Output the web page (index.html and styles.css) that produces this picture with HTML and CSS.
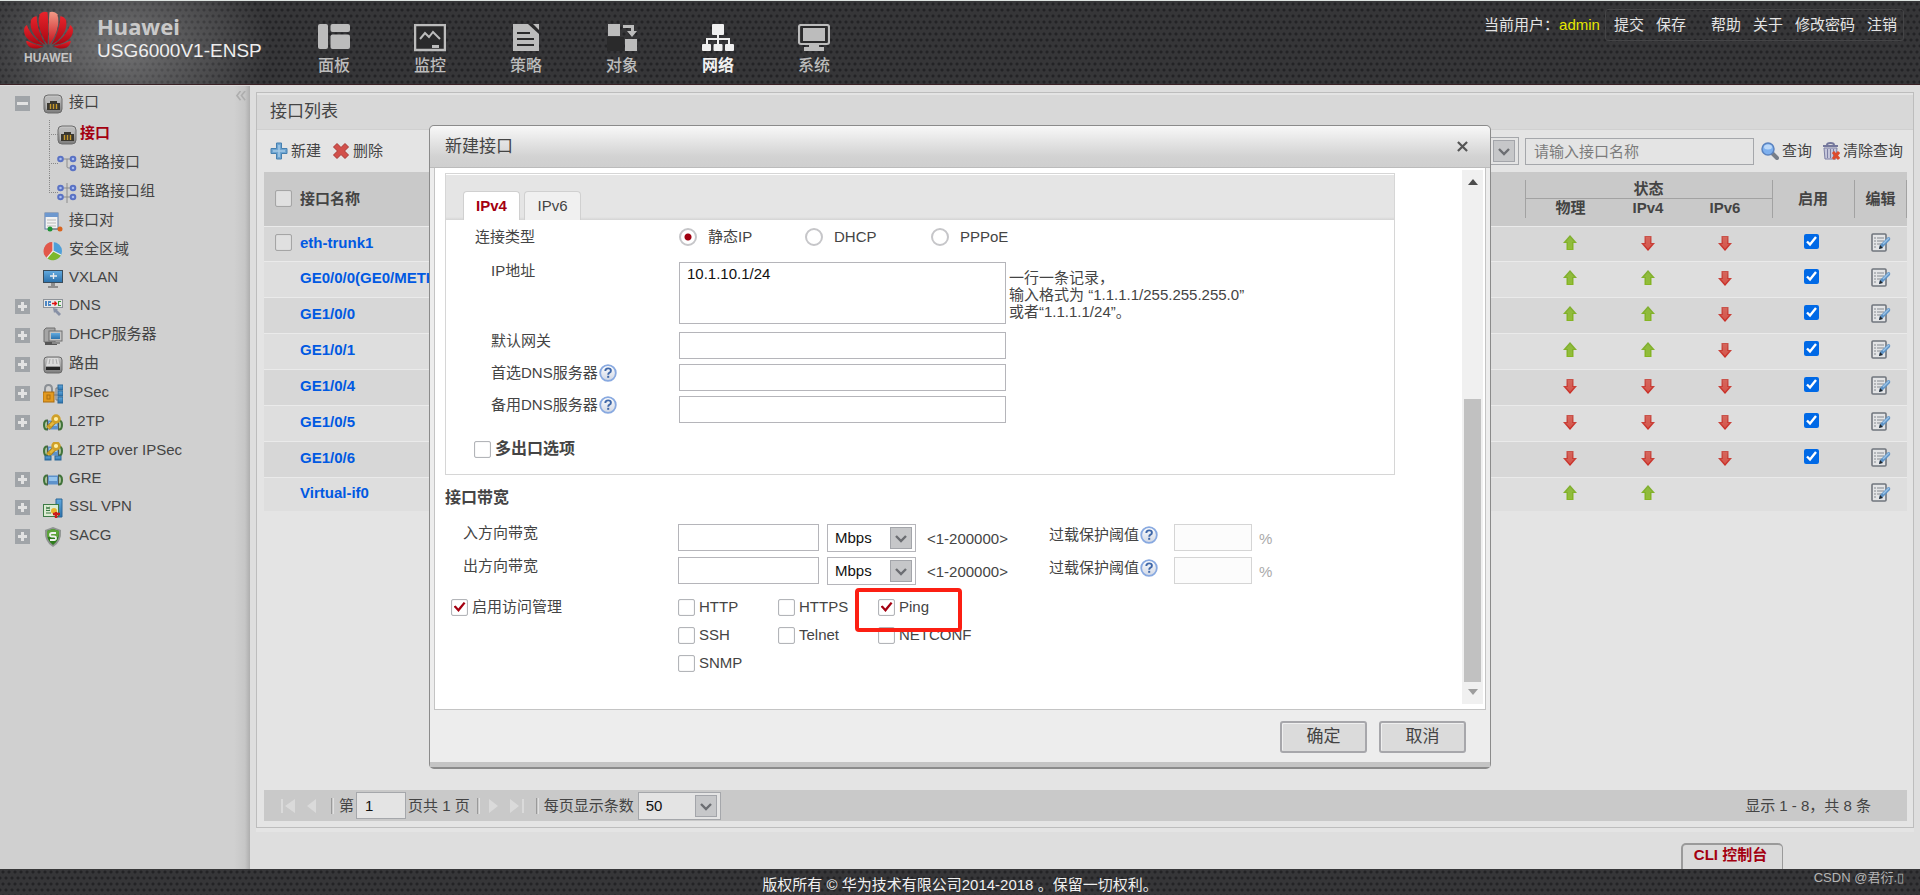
FILE: index.html
```html
<!DOCTYPE html>
<html lang="zh-CN">
<head>
<meta charset="utf-8">
<title>USG6000V1-ENSP</title>
<link rel="stylesheet" href="styles.css">
</head>
<body>
<svg class="defs" aria-hidden="true">
  <defs>
    <linearGradient id="petal" x1="0" y1="0" x2="0" y2="1"><stop offset="0" stop-color="#e8232b"/><stop offset="1" stop-color="#a80713"/></linearGradient>
    <linearGradient id="shine" x1="0" y1="0" x2="0" y2="1"><stop offset="0" stop-color="#f39a86"/><stop offset="1" stop-color="#c5101b"/></linearGradient>
    <linearGradient id="metal" x1="0" y1="0" x2="0" y2="1"><stop offset="0" stop-color="#c9c9c9"/><stop offset="1" stop-color="#7d7d7d"/></linearGradient>
    <linearGradient id="green" x1="0" y1="0" x2="0" y2="1"><stop offset="0" stop-color="#7fae33"/><stop offset="1" stop-color="#86b522"/></linearGradient>
    <linearGradient id="red" x1="0" y1="0" x2="0" y2="1"><stop offset="0" stop-color="#c9544c"/><stop offset="1" stop-color="#c92a22"/></linearGradient>
    <linearGradient id="blue" x1="0" y1="0" x2="0" y2="1"><stop offset="0" stop-color="#62a9de"/><stop offset="1" stop-color="#2c73ae"/></linearGradient>
    <linearGradient id="helpbg" x1="0" y1="0" x2="0" y2="1"><stop offset="0" stop-color="#ffffff"/><stop offset="1" stop-color="#cfd6e4"/></linearGradient>
  </defs>
  <symbol id="i-port" viewBox="0 0 20 20"><rect x="1" y="1" width="18" height="18" rx="4" fill="url(#metal)" stroke="#6c6c6c"/><rect x="3" y="3" width="14" height="13" rx="2" fill="#b9b9b9"/><path d="M4 16V9h3V7h7v2h3v7z" fill="#3b3830"/><path d="M7.500 10v5M10.500 10v5M13.500 10v5" stroke="#c79a2c" stroke-width="1.400"/></symbol>
  <symbol id="i-link" viewBox="0 0 20 20"><path d="M4 5h9M10 5v8q0 1 2 1h3" fill="none" stroke="#8c8c8c"/><g fill="#a9bdf0" stroke="#5a72c4" stroke-width="2"><circle cx="3.500" cy="5" r="2.300"/><circle cx="16" cy="5" r="2.300"/><circle cx="16" cy="14" r="2.300"/></g></symbol>
  <symbol id="i-links" viewBox="0 0 20 20"><path d="M10 0v20M4 5h12M4 14h12" stroke="#8c8c8c"/><g fill="#a9bdf0" stroke="#5a72c4" stroke-width="2"><circle cx="3.500" cy="5" r="2.300"/><circle cx="16" cy="5" r="2.300"/><circle cx="3.500" cy="14" r="2.300"/><circle cx="16" cy="14" r="2.300"/></g></symbol>
  <symbol id="i-pair" viewBox="0 0 20 20"><rect x="2" y="1" width="13" height="16" fill="#f2f2f2" stroke="#5d7ba5"/><path d="M2 1h13v4H2z" fill="#6d98cf"/><path d="M4 8h9M4 11h9M4 14h9" stroke="#b9b9b9"/><path d="M7 17h9" stroke="#777"/><circle cx="7" cy="17" r="2.500" fill="#1f9436"/><circle cx="17" cy="17" r="2.500" fill="#d9641f"/></symbol>
  <symbol id="i-zone" viewBox="0 0 20 20"><circle cx="10" cy="10" r="9" fill="#4f9fd8"/><path d="M10 10L4 17A9 9 0 0 1 10 1z" fill="#e2584a"/><path d="M10 10L4 17A9 9 0 0 0 18 14z" fill="#7cb82b"/><path d="M10 1v9l8 4M10 10l-6 7" stroke="#eee" stroke-width="1.200" fill="none"/></symbol>
  <symbol id="i-vxlan" viewBox="0 0 20 20"><rect x="0" y="1" width="20" height="13" fill="#3a4c5a"/><rect x="1" y="2" width="18" height="11" fill="url(#blue)"/><path d="M7 7h7M10.500 4v6" stroke="#eee" stroke-width="1.300"/><path d="M8 14h4v3h3v2H5v-2h3z" fill="#8d8d8d"/></symbol>
  <symbol id="i-dns" viewBox="0 0 20 20"><rect x="0.500" y="2.500" width="19" height="8" fill="#e8e8e8" stroke="#8e9399"/><path d="M2 4h2v5H2zM5 4h3v2H6v1h2v2H5z" fill="#4b86c4"/><path d="M9 6.500h4M11.500 4.500l2 2-2 2" stroke="#d11" stroke-width="1.300" fill="none"/><path d="M15 4h3v1h-2v3h2v1h-3z" fill="#3a9a3a"/><path d="M10 11l5 1-1 1 4 4-2 2-4-4-1 1z" fill="#8790a5"/></symbol>
  <symbol id="i-dhcp" viewBox="0 0 20 20"><path d="M3 2h9v14H1V4z" fill="#a5a5a5" stroke="#6f6f6f"/><path d="M2 16h12v3H2z" fill="#555"/><rect x="6" y="5" width="13" height="10" fill="#c4c4c4" stroke="#6f6f6f"/><rect x="8" y="7" width="9" height="6" fill="url(#blue)"/><path d="M9 16h8v2H9z" fill="#888"/></symbol>
  <symbol id="i-route" viewBox="0 0 20 20"><rect x="1" y="2" width="18" height="16" rx="3" fill="url(#metal)" stroke="#6a6a6a"/><path d="M5 3h10l2 8H3z" fill="#dcdcdc"/><path d="M6 9l1-5M10 9V4M14 9l-1-5" stroke="#aaa"/><rect x="3" y="12" width="14" height="3" fill="#262626"/></symbol>
  <symbol id="i-ipsec" viewBox="0 0 20 20"><path d="M2 9V5q0-4 3.500-4T9 5v4" fill="none" stroke="#8a8f94" stroke-width="2"/><rect x="0" y="8" width="11" height="10" fill="#e39a20" stroke="#a96c10"/><rect x="4" y="11" width="3" height="4" fill="none" stroke="#a96c10"/><path d="M11 11h4M13 4v12M13 4h2M13 16h2" stroke="#777" fill="none"/><g fill="url(#blue)" stroke="#2b6797"><rect x="15" y="1" width="5" height="5"/><rect x="15" y="7" width="5" height="5"/><rect x="15" y="13" width="5" height="6"/></g></symbol>
  <symbol id="i-pipe" viewBox="0 0 20 20"><path d="M4 5.500q-3 0-3 4.500t3 4.500M16 5.500q3 0 3 4.500t-3 4.500" fill="#a9c39c" stroke="#41733a" stroke-width="2"/><rect x="4" y="5.500" width="12" height="9" fill="#5d92cb"/><rect x="6" y="7" width="8" height="4" fill="#96c4ec"/><path d="M4.500 4.500v11M15.500 4.500v11" stroke="#505a50"/></symbol>
  <symbol id="i-key" viewBox="0 0 20 20"><path d="M5 15l8-8" stroke="#a87c14" stroke-width="4.600"/><path d="M5 15l8-8" stroke="#e6b83c" stroke-width="3"/><circle cx="13" cy="6" r="3.400" fill="#fff0a6" stroke="#d0a028" stroke-width="2.600"/><path d="M5 12l3 3" stroke="#c99b22" stroke-width="2"/></symbol>
  <symbol id="i-l2tp" viewBox="0 0 20 20"><use href="#i-pipe" y="2"/><use href="#i-key" y="0"/></symbol>
  <symbol id="i-l2tpsec" viewBox="0 0 20 20"><use href="#i-pipe" y="-1"/><use href="#i-key" y="-2"/><g fill="url(#blue)" stroke="#2b6797"><rect x="2" y="14" width="6" height="4"/><rect x="12" y="14" width="6" height="4"/></g></symbol>
  <symbol id="i-ssl" viewBox="0 0 20 20"><path d="M13 1h6v18h-6z" fill="url(#blue)" stroke="#2b6797"/><rect x="0.500" y="6.500" width="15" height="12" fill="#dcecd3" stroke="#3d7a45"/><path d="M3 9l4 2M3 11l4-2M3 15h5M3 12.500h4" stroke="#3d7a45"/><circle cx="11" cy="13" r="3" fill="#e8b62d"/><path d="M10 16h7M13 14v6" stroke="#cb1b1b" stroke-width="2.500"/></symbol>
  <symbol id="i-sacg" viewBox="0 0 20 20"><path d="M10 0l8 3q1 12-8 17Q1 15 2 3z" fill="#8f9492"/><path d="M10 2l6 2q1 9-6 14Q3 13 4 4z" fill="#2f7d1c"/><path d="M10 2l6 2q0 4-1 6H4V4z" fill="#5da43a"/><path d="M13 6H9q-2 0-2 1.800T9 9.500h2q2 0 2 1.800T11 13H7" fill="none" stroke="#f1f1f1" stroke-width="1.800"/></symbol>
  <symbol id="i-up" viewBox="0 0 14 16"><path d="M7 0l7 8h-3.500v7h-7V8H0z" fill="url(#green)"/><path d="M7 2l4 5H9v7H5V7H3z" fill="#a4cb57" opacity=".4"/></symbol>
  <symbol id="i-down" viewBox="0 0 14 16"><path d="M7 16l7-8h-3.500V1h-7v7H0z" fill="url(#red)"/><path d="M7 14l4-5H9V2H5v7H3z" fill="#e27b70" opacity=".5"/></symbol>
  <symbol id="i-edit" viewBox="0 0 20 20"><rect x="1" y="1" width="14" height="17" rx="1" fill="#e3e4e6" stroke="#70757d" stroke-width="1.600"/><path d="M3 5h2M6 5h7M3 8h2M6 8h7M3 11h2M6 11h5M3 14h2" stroke="#a5a8ad" stroke-width="1.300"/><path d="M8 16l1-4 8-8q3 0 2 3l-8 8z" fill="#5e93c6"/><path d="M12 11l6-6" stroke="#9cc3e6" stroke-width="1.500"/><path d="M8 16l1-4 3 3z" fill="#23282e"/></symbol>
  <symbol id="i-help" viewBox="0 0 18 18"><circle cx="9" cy="9" r="7.800" fill="url(#helpbg)" stroke="#88a9e0" stroke-width="1.800"/><path d="M6.300 7q0-2.600 2.800-2.600t2.800 2.300q0 1.300-1.400 2-1.300.7-1.300 2" fill="none" stroke="#3f67a8" stroke-width="1.900"/><rect x="8.200" y="11.800" width="2" height="2" fill="#3f67a8"/></symbol>
  <symbol id="i-chev" viewBox="0 0 22 22"><rect x="0.500" y="0.500" width="21" height="21" fill="#c6c7c9" stroke="#a3a5aa"/><path d="M6 9l5 5 5-5" fill="none" stroke="#6c6e72" stroke-width="2.400"/></symbol>
</svg>

<div class="page">
  <header class="top">
    <div class="brand">
      <svg class="logo" viewBox="0 0 50 38" aria-label="HUAWEI" role="img">
        <g fill="url(#petal)">
          <path d="M24 34C17 24 13 13 16 3 19 0 22 0 24 1 25 11 25 22 24 34z"/>
          <path d="M26 34C33 24 37 13 34 3 31 0 28 0 26 1 25 11 25 22 26 34z" fill="url(#shine)"/>
          <path d="M22 34C13 29 5 20 7 9 9 6 11 5 13 5 13 15 17 26 22 34z"/>
          <path d="M28 34C37 29 45 20 43 9 41 6 39 5 37 5 37 15 33 26 28 34z"/>
          <path d="M20 34C10 34 0 28 0 20 0 17 1 15 3 14 6 23 12 29 20 34z"/>
          <path d="M30 34C40 34 50 28 50 20 50 17 49 15 47 14 44 23 38 29 30 34z"/>
          <path d="M20 35.500C14 39 6 39 3 33 2 31 2 30 3 30 9 33 14 35 20 35.500z"/>
          <path d="M30 35.500C36 39 44 39 47 33 48 31 48 30 47 30 41 33 36 35 30 35.500z"/>
        </g>
      </svg>
      <span class="logo-name">HUAWEI</span>
    </div>
    <div class="product"><strong>Huawei</strong><span>USG6000V1-ENSP</span></div>
    <nav class="mainnav">
      <a href="#"><svg viewBox="0 0 32 28" fill="currentColor"><rect x="0" y="0" width="10" height="25" rx="2"/><rect x="12.500" y="0" width="19.500" height="8" rx="2"/><rect x="12.500" y="10.500" width="19.500" height="14.500" rx="2"/></svg>面板</a>
      <a href="#"><svg viewBox="0 0 32 28"><rect x="1" y="1" width="30" height="25" fill="#2a2a2b" stroke="currentColor" stroke-width="2.500"/><path d="M6 15l5-6 4 4 4-5 7 7" fill="none" stroke="currentColor" stroke-width="2"/><path d="M18 24v-3h7v3z" fill="currentColor"/></svg>监控</a>
      <a href="#"><svg viewBox="0 0 32 28"><path d="M3 0h17l9 9v18H3z" fill="currentColor"/><path d="M18 0l11 10V0z" fill="#2a2a2b"/><path d="M23 0h6v6z" fill="currentColor"/><path d="M7 9h13M7 15h17M7 21h17" stroke="#2a2a2b" stroke-width="2"/></svg>策略</a>
      <a href="#"><svg viewBox="0 0 32 28" fill="currentColor"><path d="M1 13h17v14H1z" fill="#2a2a2b"/><rect x="2" y="0" width="12" height="12"/><rect x="19" y="15" width="12" height="12"/><path d="M17 1h11v6h3l-5 6-5-6h4V4h-8z"/></svg>对象</a>
      <a href="#" class="on"><svg viewBox="0 0 32 28" fill="currentColor"><rect x="10" y="0" width="12" height="11" rx="1"/><rect x="0" y="20" width="9" height="7" rx="1"/><rect x="11.500" y="20" width="9" height="7" rx="1"/><rect x="23" y="20" width="9" height="7" rx="1"/><path d="M15 10h2v4h11v7h-2v-5h-9v5h-2v-5H6v5H4v-7h11z"/></svg>网络</a>
      <a href="#"><svg viewBox="0 0 32 28"><rect x="1" y="1" width="30" height="19" rx="2" fill="#2a2a2b" stroke="currentColor" stroke-width="2.200"/><rect x="5" y="4" width="22" height="13" fill="currentColor"/><path d="M11 20h10v3h5v4H6v-4h5z" fill="currentColor"/></svg>系统</a>
    </nav>
    <div class="user">
      <span>当前用户：<b class="name">admin</b></span>
      <div class="links"><a href="#">提交</a><a href="#" class="last">保存</a><a href="#">帮助</a><a href="#">关于</a><a href="#">修改密码</a><a href="#">注销</a></div>
    </div>
  </header>

  <div class="middle">
    <aside class="side">
      <button class="fold" aria-label="折叠"><svg viewBox="0 0 12 10"><path d="M5 0L1 5l4 5M10 0L6 5l4 5" fill="none" stroke="#adadad" stroke-width="1.800"/></svg></button>
      <ul class="tree">
        <li class="root"><button class="tog minus" aria-label="收起"></button><svg class="ic"><use href="#i-port"/></svg><a href="#">接口</a></li>
        <li class="sub on"><svg class="ic"><use href="#i-port"/></svg><a href="#">接口</a></li>
        <li class="sub"><svg class="ic"><use href="#i-link"/></svg><a href="#">链路接口</a></li>
        <li class="sub end"><svg class="ic"><use href="#i-links"/></svg><a href="#">链路接口组</a></li>
        <li><i class="tog none"></i><svg class="ic"><use href="#i-pair"/></svg><a href="#">接口对</a></li>
        <li><i class="tog none"></i><svg class="ic"><use href="#i-zone"/></svg><a href="#">安全区域</a></li>
        <li class="short"><i class="tog none"></i><svg class="ic"><use href="#i-vxlan"/></svg><a href="#">VXLAN</a></li>
        <li><button class="tog" aria-label="展开"></button><svg class="ic"><use href="#i-dns"/></svg><a href="#">DNS</a></li>
        <li><button class="tog" aria-label="展开"></button><svg class="ic"><use href="#i-dhcp"/></svg><a href="#">DHCP服务器</a></li>
        <li><button class="tog" aria-label="展开"></button><svg class="ic"><use href="#i-route"/></svg><a href="#">路由</a></li>
        <li><button class="tog" aria-label="展开"></button><svg class="ic"><use href="#i-ipsec"/></svg><a href="#">IPSec</a></li>
        <li><button class="tog" aria-label="展开"></button><svg class="ic"><use href="#i-l2tp"/></svg><a href="#">L2TP</a></li>
        <li><i class="tog none"></i><svg class="ic"><use href="#i-l2tpsec"/></svg><a href="#">L2TP over IPSec</a></li>
        <li class="short"><button class="tog" aria-label="展开"></button><svg class="ic"><use href="#i-pipe"/></svg><a href="#">GRE</a></li>
        <li><button class="tog" aria-label="展开"></button><svg class="ic"><use href="#i-ssl"/></svg><a href="#">SSL VPN</a></li>
        <li><button class="tog" aria-label="展开"></button><svg class="ic"><use href="#i-sacg"/></svg><a href="#">SACG</a></li>
      </ul>
    </aside>

    <main class="main">
      <section class="panel">
        <h1 class="panel-title">接口列表</h1>
        <div class="toolbar">
          <button class="tool"><svg viewBox="0 0 18 18"><path d="M6.500 1h5v5.500H17v5h-5.500V17h-5v-5.500H1v-5h5.500z" fill="#6fa5d1" stroke="#4680b0"/><path d="M9 3v12M3 9h12" stroke="#a6cae6" stroke-width="1.500"/></svg>新建</button>
          <button class="tool"><svg viewBox="0 0 18 18"><path d="M5 1.500l4 4 4-4 3.500 3.500-4 4 4 4-3.500 3.500-4-4-4 4L1.500 13l4-4-4-4z" fill="#d2504b" stroke="#a93632"/></svg>删除</button>
          <div class="search">
            <span class="sel field"><select aria-label="查询条件"><option>接口名称</option></select><svg><use href="#i-chev"/></svg></span>
            <input class="box query" type="text" placeholder="请输入接口名称" aria-label="接口名称">
            <button class="tool"><svg viewBox="0 0 18 18"><path d="M11 11l5 5" stroke="#777e88" stroke-width="4" stroke-linecap="round"/><circle cx="7" cy="7" r="6" fill="#7eb0ee" stroke="#5b83bf" stroke-width="1.500"/><ellipse cx="7" cy="5" rx="4" ry="2.500" fill="#bcd8f8"/></svg>查询</button>
            <button class="tool"><svg viewBox="0 0 18 18"><path d="M1 4h15M5 3q0-2 3.500-2T12 3" fill="none" stroke="#74779c" stroke-width="2"/><path d="M2 6h13l-1 11H3z" fill="#c5c6da" stroke="#7c7fa4"/><path d="M5.500 7v9M8.500 7v9M11.500 7v9" stroke="#7c7fa4"/><path d="M11 10l6 7M17 10l-6 7" stroke="#dd4b2d" stroke-width="3"/></svg>清除查询</button>
          </div>
        </div>
        <table class="list">
          <colgroup><col class="c-check"><col><col class="c-phy"><col class="c-v4"><col class="c-v6"><col class="c-on"><col class="c-edit"></colgroup>
          <thead>
            <tr><th rowspan="2"><input type="checkbox" class="chk dim" aria-label="全选"></th><th rowspan="2" class="left">接口名称</th><th colspan="3" class="group">状态</th><th rowspan="2" class="sep">启用</th><th rowspan="2" class="sep both">编辑</th></tr>
            <tr><th class="phy low">物理</th><th>IPv4</th><th class="v6">IPv6</th></tr>
          </thead>
          <tbody>
            <tr><td><input type="checkbox" class="chk dim" aria-label="eth-trunk1"></td><td class="left"><a href="#">eth-trunk1</a></td><td class="phy"><svg class="ar"><use href="#i-up"/></svg></td><td><svg class="ar"><use href="#i-down"/></svg></td><td class="v6"><svg class="ar"><use href="#i-down"/></svg></td><td class="use"><input type="checkbox" class="nat" checked aria-label="启用"></td><td><svg class="ed"><use href="#i-edit"/></svg></td></tr>
            <tr><td></td><td class="left"><a href="#">GE0/0/0(GE0/METH)</a></td><td class="phy"><svg class="ar"><use href="#i-up"/></svg></td><td><svg class="ar"><use href="#i-up"/></svg></td><td class="v6"><svg class="ar"><use href="#i-down"/></svg></td><td class="use"><input type="checkbox" class="nat" checked aria-label="启用"></td><td><svg class="ed"><use href="#i-edit"/></svg></td></tr>
            <tr><td></td><td class="left"><a href="#">GE1/0/0</a></td><td class="phy"><svg class="ar"><use href="#i-up"/></svg></td><td><svg class="ar"><use href="#i-up"/></svg></td><td class="v6"><svg class="ar"><use href="#i-down"/></svg></td><td class="use"><input type="checkbox" class="nat" checked aria-label="启用"></td><td><svg class="ed"><use href="#i-edit"/></svg></td></tr>
            <tr><td></td><td class="left"><a href="#">GE1/0/1</a></td><td class="phy"><svg class="ar"><use href="#i-up"/></svg></td><td><svg class="ar"><use href="#i-up"/></svg></td><td class="v6"><svg class="ar"><use href="#i-down"/></svg></td><td class="use"><input type="checkbox" class="nat" checked aria-label="启用"></td><td><svg class="ed"><use href="#i-edit"/></svg></td></tr>
            <tr><td></td><td class="left"><a href="#">GE1/0/4</a></td><td class="phy"><svg class="ar"><use href="#i-down"/></svg></td><td><svg class="ar"><use href="#i-down"/></svg></td><td class="v6"><svg class="ar"><use href="#i-down"/></svg></td><td class="use"><input type="checkbox" class="nat" checked aria-label="启用"></td><td><svg class="ed"><use href="#i-edit"/></svg></td></tr>
            <tr><td></td><td class="left"><a href="#">GE1/0/5</a></td><td class="phy"><svg class="ar"><use href="#i-down"/></svg></td><td><svg class="ar"><use href="#i-down"/></svg></td><td class="v6"><svg class="ar"><use href="#i-down"/></svg></td><td class="use"><input type="checkbox" class="nat" checked aria-label="启用"></td><td><svg class="ed"><use href="#i-edit"/></svg></td></tr>
            <tr><td></td><td class="left"><a href="#">GE1/0/6</a></td><td class="phy"><svg class="ar"><use href="#i-down"/></svg></td><td><svg class="ar"><use href="#i-down"/></svg></td><td class="v6"><svg class="ar"><use href="#i-down"/></svg></td><td class="use"><input type="checkbox" class="nat" checked aria-label="启用"></td><td><svg class="ed"><use href="#i-edit"/></svg></td></tr>
            <tr><td></td><td class="left"><a href="#">Virtual-if0</a></td><td class="phy"><svg class="ar"><use href="#i-up"/></svg></td><td><svg class="ar"><use href="#i-up"/></svg></td><td></td><td></td><td><svg class="ed"><use href="#i-edit"/></svg></td></tr>
          </tbody>
        </table>
        <div class="pager">
          <button class="pg" aria-label="首页"><svg viewBox="0 0 16 14"><path d="M1 0h2v14H1zM15 0v14L5 7z"/></svg></button>
          <button class="pg" aria-label="上一页"><svg viewBox="0 0 16 14"><path d="M12 0v14L3 7z"/></svg></button>
          <i class="bar"></i>
          <label for="pageno">第</label><input id="pageno" class="box page-no" type="text" value="1"><span class="pages">页共 1 页</span>
          <i class="bar"></i>
          <button class="pg" aria-label="下一页"><svg viewBox="0 0 16 14"><path d="M4 0v14l9-7z"/></svg></button>
          <button class="pg" aria-label="末页"><svg viewBox="0 0 16 14"><path d="M1 0v14l9-7zM13 0h2v14h-2z"/></svg></button>
          <i class="bar"></i>
          <label for="pagesize">每页显示条数</label><span class="sel size"><select id="pagesize"><option>50</option></select><svg><use href="#i-chev"/></svg></span>
          <span class="total">显示 1 - 8，共 8 条</span>
        </div>
      </section>
      <button class="cli">CLI 控制台</button>
    </main>
  </div>

  <footer class="foot">版权所有 © 华为技术有限公司2014-2018 。保留一切权利。<span class="mark">CSDN @君衍.▯</span></footer>
</div>

<div class="dialog" role="dialog" aria-label="新建接口">
  <div class="dlg-head"><span>新建接口</span><button aria-label="关闭"><svg viewBox="0 0 12 12"><path d="M1 1l10 10M11 1L1 11" stroke="#555" stroke-width="2.400"/></svg></button></div>
  <div class="dlg-body">
    <form class="form">
      <div class="ipbox">
        <div class="tabs"><button type="button" class="on">IPv4</button><button type="button">IPv6</button></div>
        <div class="row type">
          <span class="lab">连接类型</span>
          <div class="radios">
            <label><input type="radio" name="t" checked>静态IP</label>
            <label><input type="radio" name="t">DHCP</label>
            <label><input type="radio" name="t">PPPoE</label>
          </div>
        </div>
        <div class="row tall">
          <label class="lab in" for="ip">IP地址</label>
          <div class="with-hint"><textarea id="ip" class="box">10.1.10.1/24</textarea>
          <p>一行一条记录，<br>输入格式为 “1.1.1.1/255.255.255.0”<br>或者“1.1.1.1/24”。</p></div>
        </div>
        <div class="row"><label class="lab in" for="gw">默认网关</label><input id="gw" class="box wide" type="text"></div>
        <div class="row"><label class="lab in" for="d1">首选DNS服务器<svg class="help"><use href="#i-help"/></svg></label><input id="d1" class="box wide" type="text"></div>
        <div class="row"><label class="lab in" for="d2">备用DNS服务器<svg class="help"><use href="#i-help"/></svg></label><input id="d2" class="box wide" type="text"></div>
        <label class="ck multi"><input type="checkbox" class="chk">多出口选项</label>
      </div>
      <h2>接口带宽</h2>
      <div class="band">
        <label class="lab" for="bi">入方向带宽</label><input id="bi" class="box" type="text">
        <span class="sel"><select aria-label="入方向单位"><option>Mbps</option></select><svg><use href="#i-chev"/></svg></span><span class="mid">&lt;1-200000&gt;</span>
        <label class="lab2" for="ti">过载保护阈值<svg class="help"><use href="#i-help"/></svg></label><input id="ti" class="box" type="text" disabled><span class="mid off">%</span>
      </div>
      <div class="band">
        <label class="lab" for="bo">出方向带宽</label><input id="bo" class="box" type="text">
        <span class="sel"><select aria-label="出方向单位"><option>Mbps</option></select><svg><use href="#i-chev"/></svg></span><span class="mid">&lt;1-200000&gt;</span>
        <label class="lab2" for="to">过载保护阈值<svg class="help"><use href="#i-help"/></svg></label><input id="to" class="box" type="text" disabled><span class="mid off">%</span>
      </div>
      <div class="access">
        <label class="ck"><input type="checkbox" class="chk" checked>启用访问管理</label>
        <div class="protos">
          <label class="ck"><input type="checkbox" class="chk">HTTP</label>
          <label class="ck"><input type="checkbox" class="chk">HTTPS</label>
          <label class="ck ping"><input type="checkbox" class="chk" checked>Ping</label>
          <label class="ck"><input type="checkbox" class="chk">SSH</label>
          <label class="ck"><input type="checkbox" class="chk">Telnet</label>
          <label class="ck"><input type="checkbox" class="chk">NETCONF</label>
          <label class="ck"><input type="checkbox" class="chk">SNMP</label>
        </div>
      </div>
    </form>
    <div class="scroll" aria-hidden="true">
      <svg viewBox="0 0 10 6"><path d="M0 6l5-6 5 6z" fill="#4d4d4d"/></svg>
      <span class="track"></span><span class="thumb"></span>
      <svg viewBox="0 0 10 6"><path d="M0 0h10L5 6z" fill="#9d9d9d"/></svg>
    </div>
  </div>
  <div class="dlg-foot"><button>确定</button><button>取消</button></div>
</div>
</body>
</html>
```
FILE: styles.css
```css
*, *::before, *::after { box-sizing: border-box; }
body {
  margin: 0;
  font: 15px/18px "Liberation Sans", "Noto Sans CJK SC", sans-serif;
  color: #444;
  background: #dedede;
}
a { color: inherit; text-decoration: none; }
button, input, select, textarea { font: inherit; color: inherit; margin: 0; }
button { background: none; border: 0; padding: 0; }
ul { list-style: none; margin: 0; padding: 0; }
.defs { position: absolute; width: 0; height: 0; }

.page { min-height: 100vh; display: grid; grid-template-rows: 85px 1fr 26px; }

/* header */
.top, .foot {
  background-color: #363638;
  background-image: radial-gradient(circle at 3px 3px, #232325 1px, transparent 2px), radial-gradient(circle at 0 9px, #232325 1px, transparent 2px), radial-gradient(circle at 6px 9px, #232325 1px, transparent 2px);
  background-size: 6px 12px;
}
.top {
  display: flex;
  align-items: flex-start;
  border-top: 1px solid #dde3e0;
  border-bottom: 1px solid #3a2226;
  background-image: radial-gradient(ellipse 150px 100px at 120px 45px, rgba(200,200,200,.42), transparent), radial-gradient(circle at 3px 3px, #232325 1px, transparent 2px), radial-gradient(circle at 0 9px, #232325 1px, transparent 2px), radial-gradient(circle at 6px 9px, #232325 1px, transparent 2px);
  background-size: auto, 6px 12px, 6px 12px, 6px 12px;
}
.brand { width: 97px; padding: 10px 0 0 24px; display: flex; flex-direction: column; color: #c4c4c4; }
.logo { width: 49px; height: 38px; }
.logo-name { font: bold 12px/14px "Liberation Sans", sans-serif; margin-top: 2px; }
.product { width: 213px; padding-top: 13px; display: flex; flex-direction: column; color: #eee; font-size: 19px; line-height: 26px; }
.product strong { font: bold 22px/24px "Noto Sans", sans-serif; color: #c9c9c9; }
.mainnav { display: flex; flex: 1; }
.mainnav a { width: 96px; padding-top: 23px; display: flex; flex-direction: column; gap: 2px; font-size: 16px; line-height: 24px; font-weight: 500; color: #bcbcbc; padding-left: 8px; }
.mainnav svg { width: 32px; height: 28px; }
.mainnav .on { color: #f0f0f0; font-weight: bold; }
.user { display: flex; color: #e4e4e4; padding: 8px 16px 0 0; line-height: 32px; }
.user .name { font-weight: normal; color: #e6e600; }
.links { display: flex; gap: 12px; margin-left: 5px; padding: 0 6px 0 8px; border: 1px solid #444446; border-radius: 3px; line-height: 30px; }
.links .last { margin-right: 13px; }

/* sidebar */
.middle { display: flex; }
.side { width: 250px; position: relative; border-top: 1px solid #dcdcdc; padding-top: 3px; background: linear-gradient(to right, #d0d0d0 234px, #c6c6c6 245px, #aeaeae); }
.fold { position: absolute; top: 5px; right: 3px; width: 11px; height: 10px; }
.fold svg { display: block; }
.tree li { display: flex; align-items: center; height: 29px; padding-left: 15px; position: relative; }
.tree .root { padding-bottom: 2px; height: 31px; }
.tree .short { height: 27px; }
.tog { width: 15px; height: 15px; margin-right: 13px; background: linear-gradient(#e2e2e2, #e2e2e2) center/9px 3px no-repeat, linear-gradient(#e2e2e2, #e2e2e2) center/3px 9px no-repeat, #a0a4a8; }
.tog.minus { background: linear-gradient(#e2e2e2, #e2e2e2) center/11px 3px no-repeat, #a0a4a8; }
.tog.none { background: none; }
.ic { width: 20px; height: 20px; margin-right: 6px; }
.tree a { padding-bottom: 4px; }
.tree .sub { padding-left: 57px; }
.tree .sub .ic { margin-right: 3px; }
.tree .on a { color: #a40010; font-weight: bold; }
.sub::before { content: ""; position: absolute; left: 49px; top: 0; height: 29px; border-left: 1px dotted #888; }
.sub.end::before { height: 15px; }
.sub::after { content: ""; position: absolute; left: 49px; top: 14px; width: 9px; border-top: 1px dotted #888; }

/* interface list */
.main { flex: 1; display: flex; flex-direction: column; padding: 7px 6px 0; }
.panel { flex: 1; display: flex; flex-direction: column; border: 1px solid #bdbdbd; background: #e4e4e4; box-shadow: 0 4px #e4e4e4; padding-bottom: 6px; }
.panel-title { margin: 2px 0 0; padding-left: 13px; font-size: 17px; font-weight: normal; line-height: 34px; background: #d8d8d8; border-bottom: 1px solid #d0d0d0; }
.toolbar { display: flex; align-items: center; gap: 11px; height: 42px; padding: 0 10px 0 13px; }
.tool { display: flex; align-items: center; gap: 3px; white-space: nowrap; }
.tool svg { width: 18px; height: 18px; }
.search { margin-left: auto; display: flex; align-items: center; gap: 6px; }
.search .box { width: 229px; margin-right: 1px; }
.search .tool + .tool { margin-left: 4px; }
.box { height: 27px; border: 1px solid #b5b5ba; padding: 0 8px; background: #fff; color: #111; border-radius: 0; outline: 0; }
.panel .box, .panel .sel { background: #e4e4e4; border-color: #a5a7ab; }
.box::placeholder { color: #7c7c7c; }
.sel { display: grid; align-items: center; width: 89px; height: 28px; border: 1px solid #b5b5ba; background: #fff; }
.sel select { grid-area: 1/1; appearance: none; border: 0; background: none; padding: 0 7px; color: #111; height: 26px; }
.sel svg { grid-area: 1/1; justify-self: end; width: 22px; height: 22px; margin-right: 3px; pointer-events: none; }
.sel.field { width: 140px; }
.list { width: calc(100% - 13px); margin-left: 7px; border-collapse: collapse; table-layout: fixed; }
.c-check { width: 29px; } .c-phy { width: 85px; } .c-v4 { width: 76px; } .c-v6 { width: 86px; } .c-on { width: 82px; } .c-edit { width: 53px; }
.list th, .list td { padding: 0; text-align: center; }
.list .left { text-align: left; padding-left: 7px; }
.list thead { background: #c9c9c9; }
.list thead tr { height: 27px; }
.list thead tr + tr th { line-height: 18px; vertical-align: top; }
.list .group { background: linear-gradient(#a2a2a2, #a2a2a2) left bottom/1px 19px no-repeat, linear-gradient(#a2a2a2, #a2a2a2) left bottom/100% 1px no-repeat; line-height: 16px; vertical-align: bottom; padding-bottom: 2px; }
.list .low { background: linear-gradient(#a2a2a2, #a2a2a2) left top/1px 19px no-repeat; }
.list .sep { background: linear-gradient(#a2a2a2, #a2a2a2) left center/1px 38px no-repeat; }
.list .both { background: linear-gradient(#a2a2a2, #a2a2a2) left center/1px 38px no-repeat, linear-gradient(#a2a2a2, #a2a2a2) right center/1px 38px no-repeat; }
.list .phy { padding-left: 6px; }
.list .v6 { padding-right: 8px; }
.list tbody tr { height: 36px; border-top: 1px solid #eaeaea; background: #dedede; }
.list tbody tr:nth-child(odd) { background: #d7d7d7; }
.list tbody tr:first-child { height: 35px; }
.list tbody tr:last-child { height: 34px; }
.list td { padding-bottom: 2px; }
.list .use { padding: 0 4px 5px 0; }
.list td a { color: #0059e2; font-weight: bold; }
.list td .chk, .list td svg, .list td .nat { display: block; margin: 0 auto; }
.ar { width: 14px; height: 16px; }
.ed { width: 20px; height: 20px; }
.nat { width: 15px; height: 15px; accent-color: #0069e6; }
.list .chk { display: block; margin-left: 11px; }
.list td .chk { margin-left: 11px; }

.pager { margin: auto 6px 0 7px; height: 31px; display: flex; align-items: center; background: #c9c9c9; padding: 0 36px 0 16px; white-space: nowrap; }
.pg { width: 24px; height: 14px; display: flex; }
.pg svg { width: 16px; height: 14px; fill: #dadada; }
.bar { width: 3px; height: 16px; margin: 0 5px 0 3px; border-left: 1px solid #9a9a9a; border-right: 1px solid #e0e0e0; }
.page-no { width: 50px; margin: 0 2px; }
.pages { margin-right: 4px; }
.pager .sel { width: 83px; margin-left: 4px; }
.total { margin-left: auto; }
.cli { align-self: flex-end; margin: 15px 131px 0 0; width: 102px; height: 26px; border: 2px solid #9a9a9a; border-width: 2px 1px 0 2px; border-radius: 5px 5px 0 0; background: #dadada; color: #a40010; font-weight: bold; padding: 0 4px 4px 0; }

.foot { display: flex; align-items: center; justify-content: center; color: #f0f0f0; padding-top: 6px; position: relative; }
.mark { position: absolute; right: 16px; top: 0; font-size: 13px; color: #b5b5b5; }

/* dialog */
.dialog { position: absolute; top: 125px; left: 50%; translate: -50% 0; width: 1062px; max-width: 100%; border: 2px solid #8b8b8b; border-width: 1px 1px 2px; border-radius: 5px; background: #ededed; padding: 0 4px; }
.dlg-head { display: flex; justify-content: space-between; align-items: center; height: 42px; margin: 0 -4px; padding: 0 22px 0 15px; font-size: 17px; border-radius: 5px 5px 0 0; background: linear-gradient(#f8f8f8, #d2d2d2 75%, #cfcfcf); border-bottom: 1px solid #bbb; }
.dlg-head svg { display: block; width: 11px; height: 11px; }
.dlg-body { display: flex; background: #fff; border: 1px solid #c4c4c4; border-top: 0; padding: 2px 2px 5px 10px; }
.form { flex: 1; padding: 3px 67px 32px 0; }
.ipbox { border: 1px solid #d6d6d6; padding-bottom: 16px; }
.tabs { display: flex; gap: 4px; padding: 16px 0 0 17px; height: 46px; background: linear-gradient(#e5e5e5 42px, #cfcfcf 46px); border-top: 1px solid #fff; }
.tabs button { width: 57px; border: 1px solid #d0d0d0; border-bottom: 0; border-radius: 4px 4px 0 0; background: #f0f0f0; }
.tabs .on { background: #fff; color: #a40010; font-weight: bold; }
.row { display: grid; grid-template-columns: 233px 1fr; align-items: start; margin-top: 5px; }
.row.type { height: 34px; margin: 0; align-items: center; }
.row.tall { margin: 8px 0; }
.lab { padding-left: 29px; white-space: nowrap; }
.lab.in { padding-left: 45px; }
.help { width: 18px; height: 18px; vertical-align: top; margin-left: 1px; }
.radios { display: grid; grid-template-columns: repeat(3, 126px); }
.radios label { display: flex; align-items: center; gap: 11px; }
.radios input { appearance: none; width: 18px; height: 18px; border: 2px solid #c6c6c9; border-radius: 50%; background: #fff; }
.radios input:checked { background: radial-gradient(circle, #a00010 3px, transparent 4px); }
.with-hint { display: flex; gap: 3px; }
.with-hint textarea { display: block; width: 327px; height: 62px; resize: none; padding: 2px 7px; }
.with-hint p { margin: 7px 0 0; white-space: nowrap; line-height: 17px; }
.wide { width: 327px; }
.ck { display: flex; align-items: center; gap: 4px; height: 18px; }
.multi { margin: 17px 0 0 28px; font-weight: bold; font-size: 16px; }
.chk { appearance: none; width: 17px; height: 17px; border: 1px solid #b3b5b9; border-radius: 2px; background: #fff; display: grid; place-items: center; box-shadow: inset 0 0 1px #b3b5b9; }
.chk.dim { background: #e0e0e0; border-color: #a5a5a5; }
.chk:checked::after { content: ""; width: 12px; height: 10px; background: #a40010; clip-path: polygon(0 45%, 18% 35%, 40% 65%, 85% 0, 100% 12%, 42% 100%); }
.form h2 { margin: 13px 0 16px; font-size: 16px; line-height: 20px; }
.band { display: grid; grid-template-columns: 233px 141px 8px 89px 11px 122px 125px 78px 7px auto; align-items: start; height: 33px; }
.band .lab { padding-left: 18px; }
.band .sel { grid-column: 4; }
.band .mid { grid-column: 6; line-height: 30px; }
.band .lab2 { grid-column: 7; padding-top: 2px; }
.band .off { grid-column: 10; color: #aaa; }
.band .box:disabled { background: #fcfcfc; border-color: #d5d5d5; }
.access { display: grid; grid-template-columns: 227px 1fr; padding: 8px 0 0 6px; }
.protos { display: grid; grid-template-columns: repeat(3, 100px); row-gap: 10px; }
.ping { position: relative; }
.ping::after { content: ""; position: absolute; left: -23px; top: -10px; width: 107px; height: 44px; border: 4px solid #fc1f13; border-radius: 4px; z-index: 1; }
.scroll { width: 21px; background: #f0f0f0; display: flex; flex-direction: column; align-items: center; padding: 9px 0; gap: 7px; }
.scroll svg { width: 10px; height: 6px; }
.track { flex: 201; }
.thumb { flex: 284; width: 17px; background: #c1c1c1; }
.dlg-foot { display: flex; justify-content: flex-end; gap: 12px; margin: 0 -4px; padding: 11px 24px 9px; border-bottom: 5px solid #c4c4c4; }
.dlg-foot button { width: 87px; height: 32px; font-size: 17px; background: #dbdbdb; border: 2px solid #a7a7ab; border-radius: 3px; box-shadow: inset 1px 1px #efefef; }
```
